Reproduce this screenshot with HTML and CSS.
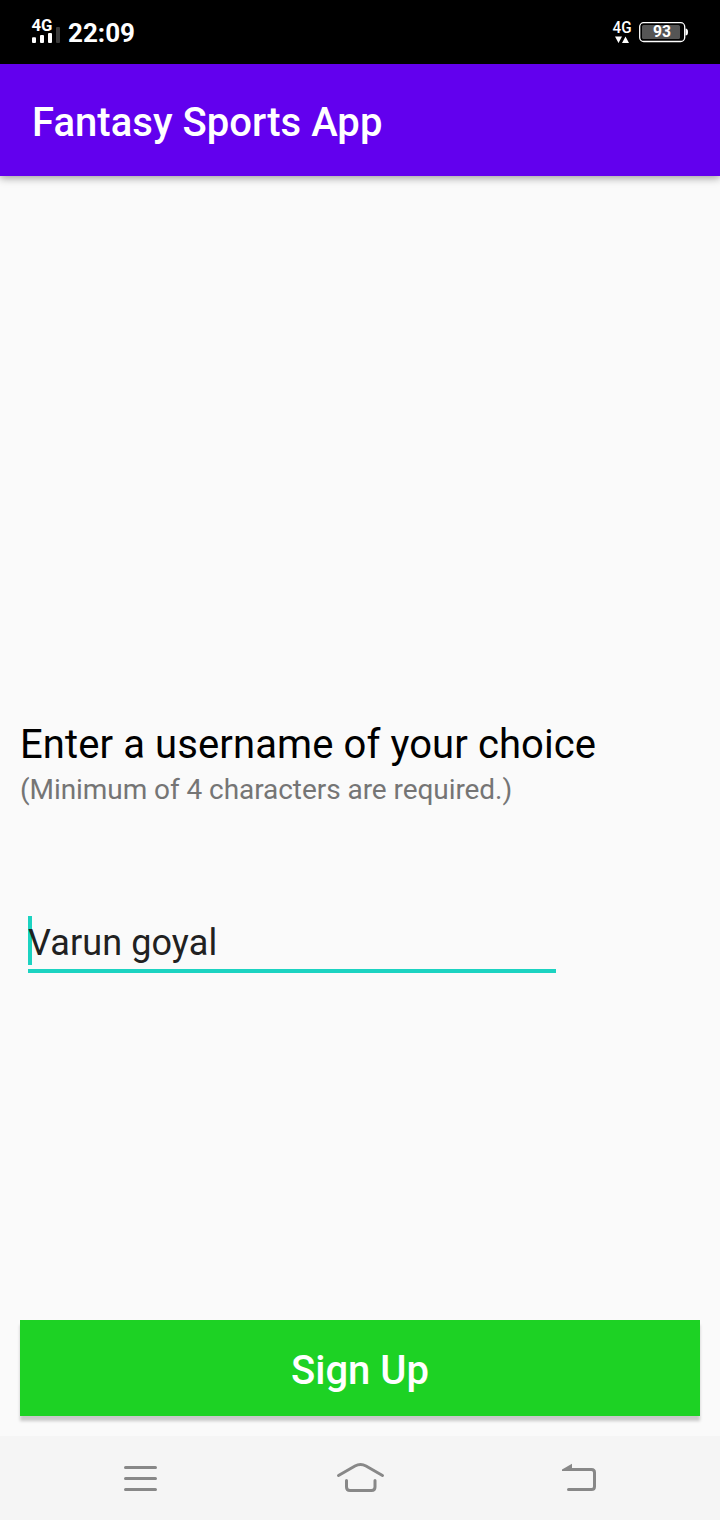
FILE: index.html
```html
<!DOCTYPE html>
<html lang="en">
<head>
<meta charset="utf-8">
<title>Fantasy Sports App</title>
<link rel="stylesheet" href="styles.css">
</head>
<body>
<div class="screen">
  <div class="status">
    <svg class="signal" width="32" height="32" viewBox="30 16 32 32">
      <text x="31.5" y="31" textLength="21" lengthAdjust="spacingAndGlyphs" class="net">4G</text>
      <g fill="#fff"><rect x="32" y="37.3" width="4" height="5.7" rx="1"/><rect x="40" y="35" width="4" height="8" rx="1"/><rect x="48" y="33" width="4" height="10" rx="1"/></g>
      <rect x="56" y="27" width="4" height="16" rx="1" fill="#3a3a3a"/>
    </svg>
    <span class="clock">22:09</span>
    <svg class="battery" width="80" height="32" viewBox="610 16 80 32">
      <text x="612.5" y="33" textLength="19" lengthAdjust="spacingAndGlyphs" class="net light">4G</text>
      <path fill="#fff" d="M615 36.5h7l-3.5 6.5zM622 43h7l-3.500-6.500z"/>
      <rect x="639.7" y="22.700" width="45" height="18.800" rx="4" fill="none" stroke="#fff" stroke-width="1.3"/>
      <rect x="642" y="25" width="38" height="14" rx="1.500" fill="#555"/>
      <path fill="#fff" d="M685.500 28.500q2.500 0 2.500 3.500t-2.500 3.500z"/>
      <text x="653" y="37.300" textLength="18" lengthAdjust="spacingAndGlyphs" class="level">93</text>
    </svg>
  </div>
  <header class="appbar"><h1 class="title">Fantasy Sports App</h1></header>
  <main class="content">
    <h2 class="prompt">Enter a username of your choice</h2>
    <p class="hint">(Minimum of 4 characters are required.)</p>
    <div class="field"><span class="caret"></span><span class="value">Varun goyal</span></div>
    <button class="signup" type="button">Sign Up</button>
  </main>
  <nav class="nav">
    <svg width="720" height="84" viewBox="0 1436 720 84" fill="none" stroke="#888" stroke-width="3" stroke-linecap="round" stroke-linejoin="round">
      <path d="M125.500 1467.500h30M125.500 1478.500h30M125.500 1489.500h30"/>
      <path d="M338.500 1475.500L355 1466Q360.500 1462.800 366 1466L382.500 1475.500M346.500 1480.500v6.500q0 3.500 3.500 3.500h21.500q3.500 0 3.500-3.500v-6.500"/>
      <path d="M568.500 1489.500h23q3 0 3-3v-14q0-3-3-3h-23"/>
      <path d="M562 1471v-1.400L572 1463.800v7.200z" fill="#888" stroke="none"/>
    </svg>
  </nav>
</div>
</body>
</html>
```
FILE: styles.css
```css
* { box-sizing: border-box; margin: 0; padding: 0; }
body { font-family: Roboto, "Liberation Sans", sans-serif; background: #fafafa; }
.screen { width: 720px; height: 1520px; display: flex; flex-direction: column; background: #fafafa; overflow: hidden; }
.status { height: 64px; flex: none; background: #000; color: #fff; display: flex; align-items: center; padding: 0 30px; }
.signal, .battery { flex: none; }
.battery { margin-left: auto; }
.net { font-size: 16px; font-weight: 700; fill: #fff; }
.light { font-size: 17px; font-weight: 500; }
.level { font-size: 16px; font-weight: 700; fill: #fff; }
.clock { margin-left: 6px; font-size: 26px; font-weight: 700; line-height: 32px; padding-top: 2px; }
.appbar { height: 112px; flex: none; background: #6200ee; color: #fff; padding: 35px 32px 0; box-shadow: 0 2px 8px rgba(0, 0, 0, .38); }
.title { font-size: 40px; font-weight: 500; line-height: 47px; letter-spacing: .04px; white-space: nowrap; }
.content { flex: 1; display: flex; flex-direction: column; padding: 545px 20px 20px; }
.prompt { font-size: 40px; font-weight: 400; line-height: 48px; letter-spacing: .1px; color: #000; white-space: nowrap; }
.hint { margin-top: 4px; font-size: 28px; line-height: 34px; letter-spacing: -.06px; color: #757575; white-space: nowrap; }
.field { display: flex; width: 528px; height: 57px; margin: 109px 0 0 8px; border-bottom: 4px solid #1cd3c1; }
.caret { width: 4px; height: 49px; background: #1cd3c1; }
.value { margin-left: -4px; padding-top: 6px; font-size: 36px; line-height: 43px; letter-spacing: .1px; color: #212121; white-space: nowrap; }
.signup { margin-top: auto; width: 680px; height: 96px; border: 0; background: #1dd224; color: #fff; font: 500 40px/48px Roboto, "Liberation Sans", sans-serif; padding-top: 6px; box-shadow: 0 5px 3px rgba(0, 0, 0, .2); }
.nav { height: 84px; flex: none; background: #f5f5f5; }
.nav svg { display: block; }
```
